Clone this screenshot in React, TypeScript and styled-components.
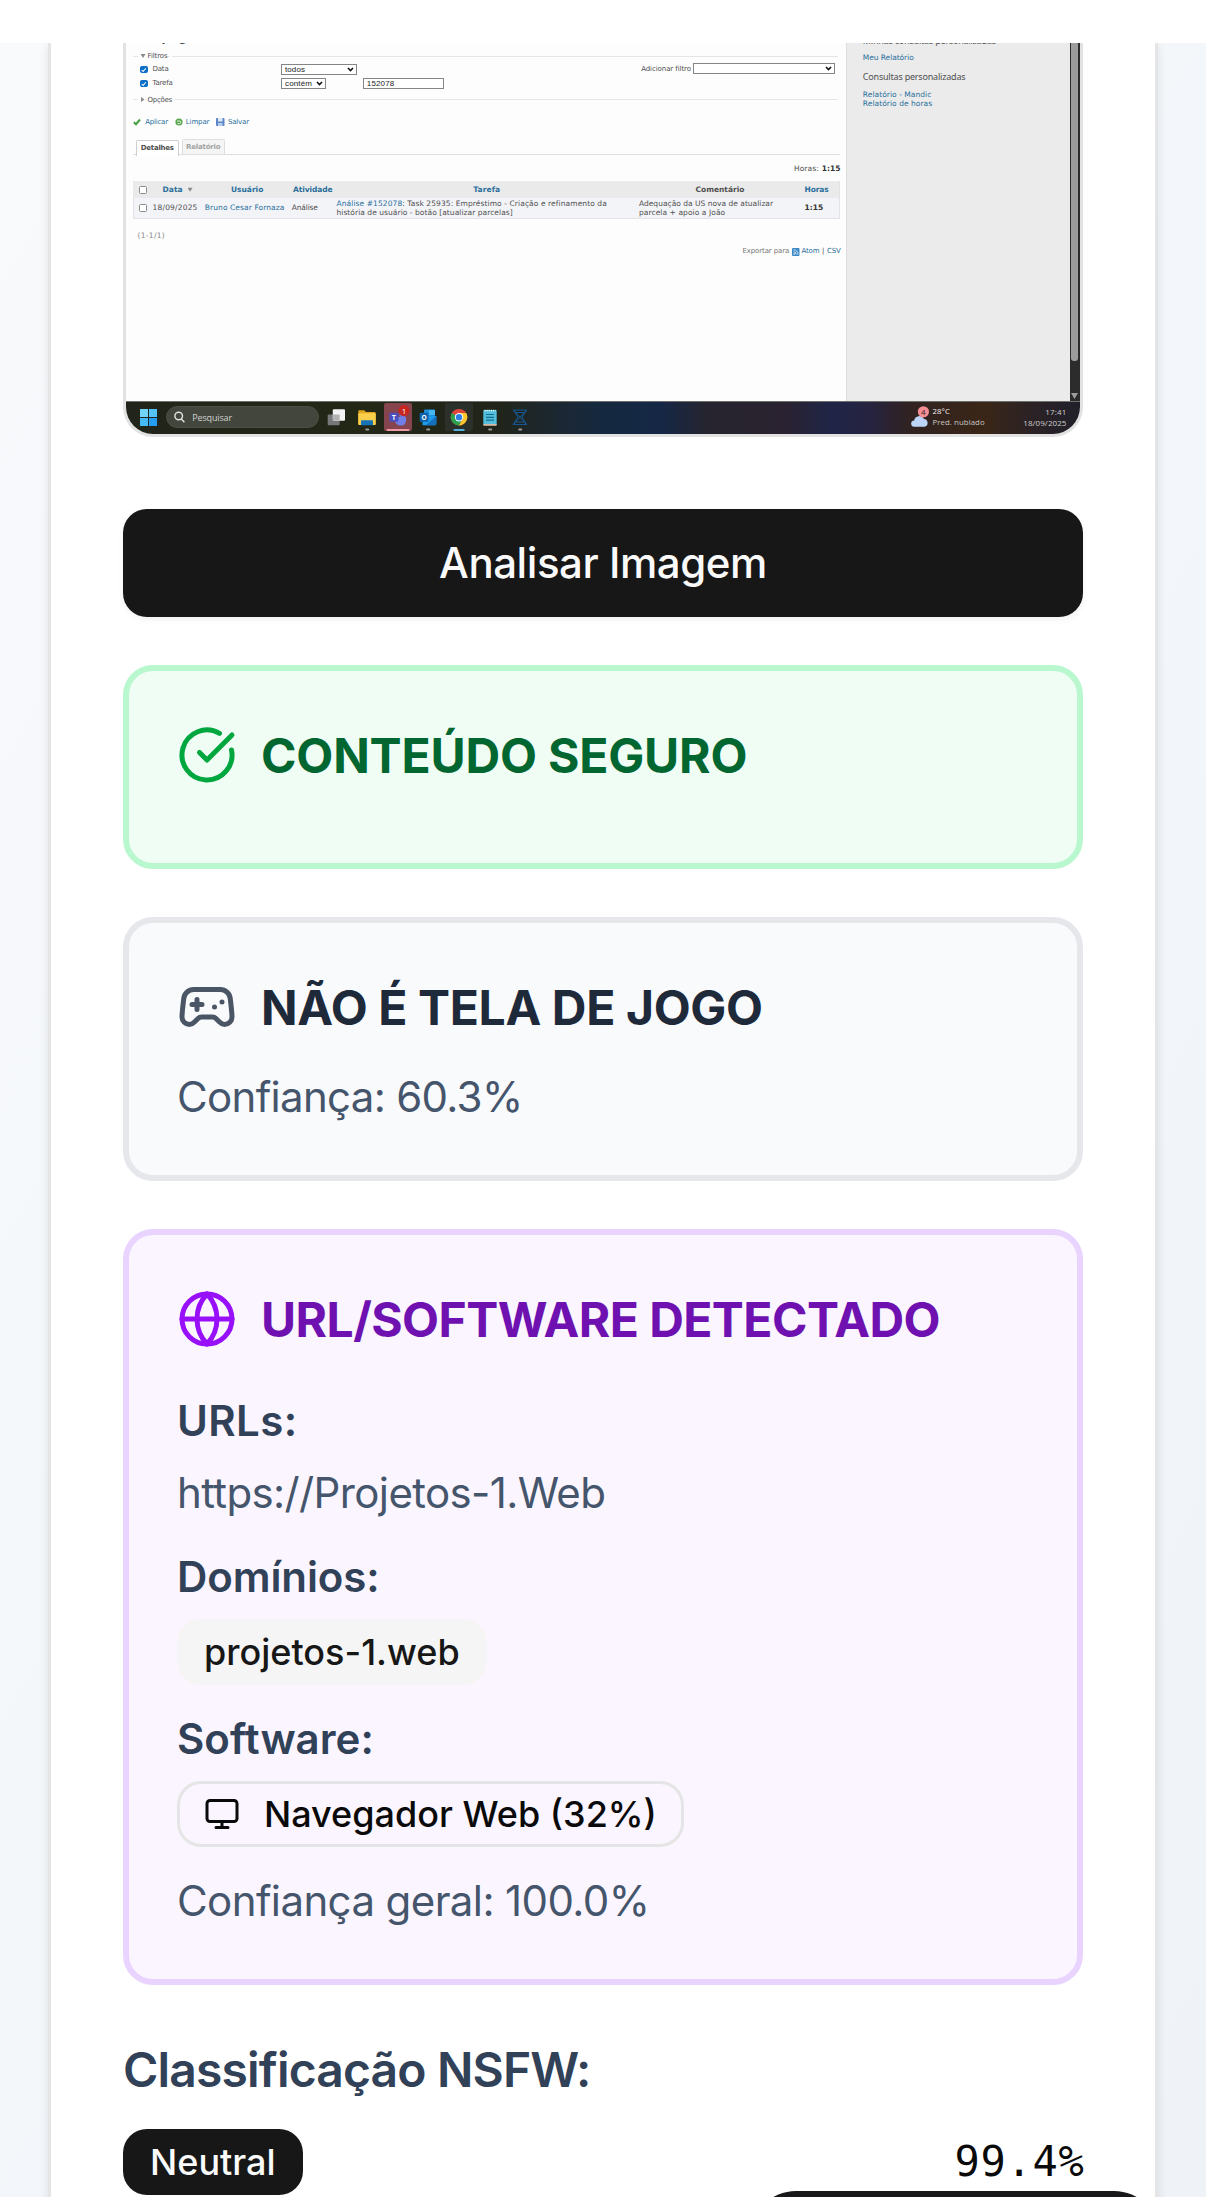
import React from "react";
import styled, { createGlobalStyle } from "styled-components";

const sans = 'Inter, "Liberation Sans", sans-serif';
const verdana = '"DejaVu Sans", sans-serif';

const GlobalStyle = createGlobalStyle`
  *, *::before, *::after { box-sizing: border-box; }
  body { margin: 0; background: #fff; font-family: ${sans}; }
  h2, h3, p { margin: 0; }
`;

/* ---------- page shell ---------- */

const Page = styled.div`
  position: relative;
  display: flex;
  flex-direction: column;
  height: 2197px;
  overflow: hidden;
`;

const StatusArea = styled.header`
  flex: none;
  height: 43px;
  background: #fff;
`;

const Backdrop = styled.main`
  flex: 1;
  display: flex;
  min-height: 0;
  padding: 0 48px;
  overflow: hidden;
  background: linear-gradient(to bottom right, #f8fafc, #eff3f8);
`;

const Card = styled.section`
  flex: 1;
  display: flex;
  flex-direction: column;
  height: 2300px;
  padding: 0 72px;
  border: 3px solid #e5e5e5;
  border-top: 0;
  background: #fff;
  box-shadow: 0 3px 9px rgba(0, 0, 0, 0.1);
`;

/* ---------- uploaded capture ---------- */

const Preview = styled.div`
  flex: none;
  display: flex;
  flex-direction: column;
  height: 394px;
  border: 3px solid #e2e2e2;
  border-top: 0;
  border-radius: 0 0 30px 30px;
  overflow: hidden;
  background: #fdfdfd;
  font-family: ${verdana};
  color: #484848;
`;

const Screen = styled.div`
  flex: 1;
  display: flex;
  min-height: 0;
`;

const Report = styled.div`
  flex: none;
  display: flex;
  flex-direction: column;
  width: 720.5px;
  padding: 0 6px 0 7px;
  border-right: 1px solid #dcdcdc;
`;

const Tiny = styled.span<{ $size?: number; $ls?: number; $bold?: boolean; $color?: string; $w?: number; $font?: string }>`
  flex: none;
  display: block;
  white-space: nowrap;
  width: ${(p) => (p.$w ? `${p.$w}px` : "auto")};
  font-family: ${(p) => p.$font ?? verdana};
  font-size: ${(p) => p.$size ?? 7}px;
  font-weight: ${(p) => (p.$bold ? 700 : 400)};
  letter-spacing: ${(p) => p.$ls ?? 0}px;
  color: ${(p) => p.$color ?? "#505050"};
`;

const link = "#2a6f9c";

const ReportTitle = styled.div`
  flex: none;
  height: 14px;
  margin-top: -10px;
  padding-left: 5px;
  line-height: 8px;
  font-size: 11.5px;
  font-weight: 700;
  letter-spacing: -0.9px;
`;

const Legend = styled.div<{ $h: number; $top?: number }>`
  flex: none;
  display: flex;
  align-items: center;
  height: ${(p) => p.$h}px;
  padding-top: ${(p) => p.$top ?? 0}px;
  line-height: 10px;
`;

const Rule = styled.i<{ $w?: number }>`
  ${(p) => (p.$w ? `flex: none; width: ${p.$w}px;` : "flex: 1;")}
  height: 1px;
  margin: 0 2px 0 0;
  background: #e6e6e6;
`;

const Caret = styled.i<{ $side?: boolean; $gap?: number }>`
  flex: none;
  width: 5px;
  height: 5px;
  margin: 0 2px 0 ${(p) => p.$gap ?? 1.5}px;
  background: #8a8a8a;
  clip-path: ${(p) => (p.$side ? "polygon(10% 0, 80% 50%, 10% 100%)" : "polygon(0 10%, 100% 10%, 50% 90%)")};
`;

const FilterRow = styled.div`
  flex: none;
  display: flex;
  align-items: center;
  height: 11px;
  margin-bottom: 3px;
  padding-left: 7px;
  line-height: 11px;

  & + & { margin-bottom: 0; }
`;

const Box = styled.i<{ $on?: boolean }>`
  flex: none;
  display: flex;
  width: 7.5px;
  height: 7.7px;
  margin-right: 5.1px;
  border: 1px solid ${(p) => (p.$on ? "#0d6fc6" : "#8c8c8c")};
  border-radius: 1.5px;
  background: ${(p) => (p.$on ? "#0d6fc6" : "#fff")};
`;

const Field = styled.div<{ $w: number; $ml?: number; $up?: number }>`
  flex: none;
  display: flex;
  align-items: center;
  justify-content: space-between;
  width: ${(p) => p.$w}px;
  height: 11.2px;
  margin-left: ${(p) => p.$ml ?? 0}px;
  margin-top: ${(p) => -(p.$up ?? 0)}px;
  padding: 0 2px 0 2.5px;
  border: 1px solid #858585;
  background: #fff;
`;

const Actions = styled.div`
  flex: none;
  display: flex;
  align-items: center;
  height: 24px;
  line-height: 10px;
`;

const Action = styled.div<{ $w: number; $gap: number }>`
  flex: none;
  display: flex;
  align-items: center;
  gap: ${(p) => p.$gap}px;
  width: ${(p) => p.$w}px;
`;

const Tabs = styled.div`
  flex: none;
  display: flex;
  align-items: flex-end;
  gap: 3px;
  height: 16px;
  margin-top: 5px;
  padding-left: 3px;
  border-bottom: 1.5px solid #dedede;
`;

const Tab = styled.div<{ $w: number; $active?: boolean }>`
  display: flex;
  align-items: flex-start;
  justify-content: center;
  width: ${(p) => p.$w}px;
  height: ${(p) => (p.$active ? 16 : 15)}px;
  margin-bottom: ${(p) => (p.$active ? -1.5 : 0)}px;
  border: 1px solid ${(p) => (p.$active ? "#cfcfcf" : "#dedede")};
  border-bottom: 0;
  border-radius: 2px 2px 0 0;
  background: ${(p) => (p.$active ? "#fff" : "#f5f5f5")};
  line-height: 14.5px;
`;

const Totals = styled.div`
  flex: none;
  display: flex;
  justify-content: flex-end;
  gap: 3px;
  height: 26px;
  margin-right: -1px;
  line-height: 27px;
`;

const Table = styled.div`
  flex: none;
  border: 1px solid #e3e3e6;
  border-top-color: #ebebeb;
  height: 38px;
  background: #f3f4f8;
`;

const TableRow = styled.div<{ $head?: boolean }>`
  display: grid;
  grid-template-columns: 19.6px 52.2px 87px 44.7px 302.5px 165.5px 1fr;
  align-items: center;
  height: ${(p) => (p.$head ? 15.5 : 21)}px;
  margin-left: -1px;
  line-height: 9.3px;
  background: ${(p) => (p.$head ? "#eaeaea" : "transparent")};
`;

const Cell = styled.div<{ $pad?: number }>`
  display: flex;
  flex-wrap: wrap;
  align-items: center;
  padding-left: ${(p) => p.$pad ?? 0}px;
`;

const Pager = styled.div`
  flex: none;
  height: 33px;
  padding-left: 4.5px;
  line-height: 33px;
`;

const Export = styled.div`
  flex: none;
  display: flex;
  align-items: center;
  justify-content: flex-end;
  height: 9px;
  margin: -5px -1px 0 0;
  line-height: 9px;
`;

const Sidebar = styled.aside`
  flex: 1;
  display: flex;
  flex-direction: column;
  padding-left: 16.3px;
  background: #ebebeb;
`;

const SideLine = styled.div<{ $h: number; $mt?: number }>`
  flex: none;
  height: ${(p) => p.$h}px;
  line-height: ${(p) => p.$h}px;
  margin-top: ${(p) => p.$mt ?? 0}px;
`;

const Scrollbar = styled.div`
  flex: none;
  display: flex;
  flex-direction: column;
  align-items: center;
  justify-content: space-between;
  width: 10.5px;
  padding-bottom: 2px;
  background: #2c2c2c;
`;

const Thumb = styled.i`
  width: 6.6px;
  height: 318px;
  border-radius: 0 0 3px 3px;
  background: #9c9c9c;
`;

const Taskbar = styled.div`
  flex: none;
  display: flex;
  align-items: center;
  height: 33.5px;
  padding: 0 13.5px 1px 14px;
  border-top: 1px solid #6d706c;
  background: linear-gradient(
    to right,
    #20241a 0%, #222716 24%, #20241a 39%, #1a2838 47%, #14293f 50%, #152746 56%,
    #26242f 61%, #2a2230 69%, #1f2548 74%, #262340 78%, #302222 82%, #3a2617 90%, #2b2226 95%, #20202a 100%
  );
`;

const Search = styled.div`
  flex: none;
  display: flex;
  align-items: center;
  gap: 7px;
  width: 153.6px;
  height: 22.4px;
  margin: 0 1.5px 0 8.7px;
  padding-left: 7.5px;
  border: 1px solid #4c4f47;
  border-radius: 12px;
  background: #42463d;
`;

const Slot = styled.div`
  flex: none;
  display: flex;
  justify-content: center;
  width: 30.7px;
`;

const Weather = styled.div`
  display: flex;
  align-items: center;
  gap: 5px;
  margin-left: auto;
`;

const Stack = styled.div<{ $right?: boolean; $ml?: number }>`
  display: flex;
  flex-direction: column;
  align-items: ${(p) => (p.$right ? "flex-end" : "flex-start")};
  margin-left: ${(p) => p.$ml ?? 0}px;
  line-height: 11.2px;
`;

/* ---------- analysis results ---------- */

const AnalyzeButton = styled.button`
  flex: none;
  height: 108px;
  margin: 72px 0 48px;
  padding: 0 0 1px;
  border: 0;
  border-radius: 24px;
  background: #171717;
  color: #fafafa;
  font: 500 42px/60px ${sans};
  letter-spacing: -0.45px;
  box-shadow: 0 3px 6px rgba(0, 0, 0, 0.05);
`;

const tones = {
  safe: { bg: "#f0fdf4", border: "#b9f8cf", icon: "#00a63e", title: "#016630" },
  neutral: { bg: "#f9fafc", border: "#e5e7eb", icon: "#4a5565", title: "#1e2939" },
  detected: { bg: "#faf5ff", border: "#e9d4ff", icon: "#9810fa", title: "#6e11b0" },
};
type Tone = keyof typeof tones;

const Panel = styled.section<{ $tone: Tone }>`
  flex: none;
  display: flex;
  flex-direction: column;
  align-items: flex-start;
  margin-bottom: 48px;
  padding: 48px;
  border: 6px solid ${(p) => tones[p.$tone].border};
  border-radius: 30px;
  background: ${(p) => tones[p.$tone].bg};
`;

const PanelHead = styled.div<{ $tone: Tone }>`
  display: flex;
  align-items: center;
  gap: 24px;
  height: 72px;
  margin-bottom: 24px;
  color: ${(p) => tones[p.$tone].icon};

  svg { flex: none; display: block; }
`;

const PanelTitle = styled.h2<{ $tone: Tone; $ls: number }>`
  padding-top: 2px;
  font-size: 48px;
  font-weight: 700;
  line-height: 72px;
  white-space: nowrap;
  letter-spacing: ${(p) => p.$ls}px;
  color: ${(p) => tones[p.$tone].title};
`;

const BodyText = styled.p<{ $ls?: number }>`
  font-size: 42px;
  line-height: 60px;
  letter-spacing: ${(p) => p.$ls ?? -0.6}px;
  color: #45556c;
`;

const Label = styled(BodyText)`
  font-weight: 600;
  color: #314158;
`;

const Group = styled.div`
  display: flex;
  flex-direction: column;
  align-items: flex-start;
  gap: 12px;
  margin-bottom: 24px;
`;

const Details = styled.div`
  display: flex;
  flex-direction: column;
  padding-top: 12px;
`;

const Badge = styled.span<{ $kind: "solid" | "muted" | "outline" }>`
  display: inline-flex;
  align-items: center;
  gap: 24px;
  height: 66px;
  padding: 0 24px;
  border: 3px solid ${(p) => (p.$kind === "outline" ? "#e5e5e5" : "transparent")};
  border-radius: 24px;
  background: ${(p) => ({ solid: "#171717", muted: "#f5f5f5", outline: "transparent" })[p.$kind]};
  color: ${(p) => ({ solid: "#fafafa", muted: "#171717", outline: "#0a0a0a" })[p.$kind]};
  font-size: 36px;
  font-weight: 500;
  line-height: 48px;
  white-space: nowrap;
`;

const SectionTitle = styled.h3`
  height: 72px;
  padding-top: 1px;
  font-size: 48px;
  font-weight: 600;
  line-height: 72px;
  margin-bottom: 24px;
  letter-spacing: -0.83px;
  color: #314158;
`;

const ScoreRow = styled.div`
  flex: none;
  display: flex;
  align-items: center;
  justify-content: space-between;
`;

const Score = styled.span`
  font: 400 42px/60px "DejaVu Sans Mono", monospace;
  letter-spacing: 0.7px;
  margin-right: -1.5px;
  color: #0a0a0a;
`;

const Toast = styled.div`
  position: absolute;
  left: 750px;
  top: 2191px;
  width: 410px;
  height: 92px;
  border-radius: 46px;
  background: #18181a;
`;

/* ---------- icons ---------- */

const Lucide = ({ size = 60, children }: { size?: number; children: React.ReactNode }) => (
  <svg width={size} height={size} viewBox="0 0 24 24" fill="none" stroke="currentColor" strokeWidth={2} strokeLinecap="round" strokeLinejoin="round">
    {children}
  </svg>
);

const CheckIcon = () => (
  <Lucide>
    <path d="M21.801 10A10 10 0 1 1 17 3.335" />
    <path d="m9 11 3 3L22 4" />
  </Lucide>
);

const GamepadIcon = () => (
  <Lucide>
    <path d="M6 11h4M8 9v4M15 12h.01M18 10h.01" />
    <path d="M17.32 5H6.68a4 4 0 0 0-3.978 3.59c-.006.052-.01.101-.017.152C2.604 9.416 2 14.456 2 16a3 3 0 0 0 3 3c1 0 1.5-.5 2-1l1.414-1.414A2 2 0 0 1 9.828 16h4.344a2 2 0 0 1 1.414.586L17 18c.5.5 1 1 2 1a3 3 0 0 0 3-3c0-1.545-.604-6.584-.685-7.258-.007-.05-.011-.1-.017-.151A4 4 0 0 0 17.32 5z" />
  </Lucide>
);

const GlobeIcon = () => (
  <Lucide>
    <circle cx="12" cy="12" r="10" />
    <path d="M12 2a14.5 14.5 0 0 0 0 20 14.5 14.5 0 0 0 0-20" />
    <path d="M2 12h20" />
  </Lucide>
);

const MonitorIcon = () => (
  <Lucide size={36}>
    <rect width="20" height="14" x="2" y="3" rx="2" />
    <path d="M8 21h8M12 17v4" />
  </Lucide>
);

const Tick = () => (
  <svg width="5.5" height="5.7" viewBox="0 0 6 6" fill="none" stroke="#fff" strokeWidth="1.1">
    <path d="M.8 3.2 2.4 4.7 5.3 1.3" />
  </svg>
);

const Chevron = () => (
  <svg width="7" height="5" viewBox="0 0 7 5" fill="none" stroke="#111" strokeWidth="1.6">
    <path d="M1 1l2.5 2.5L6 1" />
  </svg>
);

const TaskIcon = ({ dot = true, children }: { dot?: boolean; children: React.ReactNode }) => (
  <Slot>
    <svg width="28" height="28" viewBox="0 0 28 28">
      {children}
      {dot && <rect x="12.2" y="25.6" width="4" height="2" rx="1" fill="#9a9b98" />}
    </svg>
  </Slot>
);

const TaskIcons = () => (
  <>
    <TaskIcon dot={false}>
      <rect x="5.7" y="11.5" width="12" height="10.7" rx="1" fill="#77787a" />
      <rect x="10.8" y="6.3" width="12.2" height="11.4" rx="1" fill="#f3f3f3" />
      <rect x="10.8" y="11.5" width="6.9" height="6.2" fill="#b3b3b3" />
    </TaskIcon>
    <TaskIcon>
      <path d="M5.3 8.4c0-.8.4-1.2 1.2-1.2h4.7l1.8 1.9h8.5c.7 0 1.2.5 1.2 1.2v11.200H5.3z" fill="#e3a51c" />
      <rect x="5.3" y="10.2" width="17.4" height="11.8" rx="1" fill="#fbcf4b" />
      <path d="M8 22.3v-3.800c0-.8.5-1.2 1.2-1.2h9.600c.8 0 1.2.4 1.2 1.2v3.800z" fill="#1673b8" />
    </TaskIcon>
    <TaskIcon dot={false}>
      <rect width="28" height="28" rx="2" fill="#86444f" />
      <circle cx="18.5" cy="12" r="3" fill="#6f7bdc" />
      <path d="M11 14h11v3.500c0 3-2 5-5 5s-6-2-6-5z" fill="#7180e8" />
      <rect x="5.4" y="9.8" width="9" height="9" rx="1" fill="#4a4fbd" />
      <text x="9.9" y="16.7" fontSize="6.5" fontWeight="700" fontFamily="Open Sans, sans-serif" textAnchor="middle" fill="#fff">T</text>
      <circle cx="20" cy="7.6" r="5.6" fill="#c62520" />
      <text x="20" y="10.6" fontSize="8" fontFamily="Open Sans, sans-serif" textAnchor="middle" fill="#fff">1</text>
      <rect x="2.5" y="26" width="23" height="2" rx="1" fill="#f19aa5" />
    </TaskIcon>
    <TaskIcon>
      <rect x="10" y="6.5" width="11" height="8" rx="1" fill="#1c8fdd" />
      <rect x="15" y="7" width="6" height="5" fill="#45b8f2" />
      <path d="M8.5 13 22.3 13v7.800c0 .9-.5 1.4-1.4 1.4H8.5z" fill="#1e9be9" />
      <path d="M22.3 13 12 22.2h8.900c.9 0 1.4-.5 1.4-1.4z" fill="#1470be" />
      <rect x="5.7" y="9.8" width="8.8" height="9" rx="1" fill="#0c62ad" />
      <text x="10.1" y="16.6" fontSize="6.5" fontWeight="700" fontFamily="Open Sans, sans-serif" textAnchor="middle" fill="#fff">O</text>
    </TaskIcon>
    <TaskIcon dot={false}>
      <rect width="28" height="28" rx="2" fill="#2c302a" />
      <circle cx="14" cy="14.2" r="8.3" fill="#e2453a" />
      <path d="M6.81 10.05A8.3 8.3 0 0 0 14 22.5l3.6-6.2L14 14.2z" fill="#2da04c" />
      <path d="M14 22.5A8.3 8.3 0 0 0 21.19 10.05H14v4.15l3.6 2.1z" fill="#fbc82c" />
      <circle cx="14" cy="14.2" r="4.2" fill="#fff" />
      <circle cx="14" cy="14.2" r="3.2" fill="#2f7de6" />
      <rect x="8.5" y="26" width="11.2" height="2" rx="1" fill="#55aedc" />
    </TaskIcon>
    <TaskIcon>
      <rect x="7.3" y="7" width="13.4" height="15.3" rx="1" fill="#54bfdc" />
      <path d="M7.3 21h13.4v.8c0 .6-.4.9-1 .9H8.3c-.6 0-1-.3-1-.9z" fill="#d9b9a0" />
      <path d="M8.5 7.5h11" stroke="#e6f6fa" strokeWidth="1.6" strokeDasharray="1.2 .9" />
      <path d="M10 11.5h8M10 14.3h8M10 17.1h8" stroke="#116f8d" strokeWidth="1.2" />
    </TaskIcon>
    <TaskIcon>
      <path d="M7.3 7h13.4L16 14l4.7 7.5H7.3L12 14zM7.3 7l13.4 14.5M20.7 7 7.3 21.5M10 9.5h8M10 19h8" fill="none" stroke="#145c9c" strokeWidth=".9" />
    </TaskIcon>
  </>
);

/* ---------- sections ---------- */

const arial = '"Liberation Sans", sans-serif';
const noto = '"Noto Sans", sans-serif';
const segoe = '"Open Sans", sans-serif';

const Capture = () => (
  <Preview>
    <Screen>
      <Report>
        <ReportTitle>Tempo gasto</ReportTitle>
        <Legend $h={17} $top={1}>
          <Rule $w={5} />
          <Caret $gap={0.5} />
          <Tiny $ls={-0.11}>Filtros</Tiny>
          <Rule $w={2} />
          <Rule />
        </Legend>
        <FilterRow>
          <Box $on><Tick /></Box>
          <Tiny $w={128.9} $ls={-0.2}>Data</Tiny>
          <Field $w={75.4}>
            <Tiny $size={8} $ls={0.1} $font={arial} $color="#222">todos</Tiny>
            <Chevron />
          </Field>
          <Tiny $w={284.3} />
          <Tiny $w={52} $ls={-0.085}>Adicionar filtro</Tiny>
          <Field $w={141.6} $up={2}><i /><Chevron /></Field>
        </FilterRow>
        <FilterRow>
          <Box $on><Tick /></Box>
          <Tiny $w={128.9} $ls={-0.2}>Tarefa</Tiny>
          <Field $w={45}>
            <Tiny $size={8} $ls={0.16} $font={arial} $color="#222">contém</Tiny>
            <Chevron />
          </Field>
          <Field $w={81} $ml={36.8}>
            <Tiny $size={8} $ls={0.15} $font={arial} $color="#222">152078</Tiny>
          </Field>
        </FilterRow>
        <Legend $h={21}>
          <Rule $w={5} />
          <Caret $side $gap={0.5} />
          <Tiny $ls={-0.28}>Opções</Tiny>
          <Rule $w={1} />
          <Rule />
        </Legend>
        <Actions>
          <Action $w={41.8} $gap={4.2}>
            <svg width="8" height="8" viewBox="0 0 8 8" fill="none" stroke="#4aa045" strokeWidth="2"><path d="M.8 4.2 3 6.2 7 1.5" /></svg>
            <Tiny $ls={-0.21} $color={link}>Aplicar</Tiny>
          </Action>
          <Action $w={41.2} $gap={3}>
            <svg width="8" height="8" viewBox="0 0 8 8"><circle cx="4" cy="4" r="3.6" fill="#58a64e" /><path d="M2 3h2.500a1.3 1.3 0 0 1 0 2.6H2.6" fill="none" stroke="#e7f5e4" strokeWidth="1" /></svg>
            <Tiny $ls={-0.12} $color={link}>Limpar</Tiny>
          </Action>
          <Action $w={40} $gap={3}>
            <svg width="9" height="8" viewBox="0 0 9 8"><rect width="8.5" height="8" rx="1" fill="#5c86c8" /><rect x="2" width="4.5" height="3.5" fill="#dfe9f7" /><rect x="2" y="5" width="4.5" height="3" fill="#b9cdec" /></svg>
            <Tiny $ls={-0.18} $color={link}>Salvar</Tiny>
          </Action>
        </Actions>
        <Tabs>
          <Tab $w={42.5} $active><Tiny $bold $ls={-0.22}>Detalhes</Tiny></Tab>
          <Tab $w={43.5}><Tiny $bold $ls={-0.18} $color="#a3a3a3">Relatório</Tiny></Tab>
        </Tabs>
        <Totals>
          <Tiny $size={7.5} $ls={0.1}>Horas:</Tiny>
          <Tiny $size={7.5} $bold $color="#333">1:15</Tiny>
        </Totals>
        <Table>
          <TableRow $head>
            <Cell $pad={6.2}><Box /></Cell>
            <Cell $pad={10}>
              <Tiny $size={7.5} $bold $color={link}>Data</Tiny>
              <Caret $gap={5} />
            </Cell>
            <Cell $pad={26.2}><Tiny $size={7.5} $bold $color={link}>Usuário</Tiny></Cell>
            <Cell $pad={1.2}><Tiny $size={7.5} $bold $ls={-0.09} $color={link}>Atividade</Tiny></Cell>
            <Cell $pad={136.8}><Tiny $size={7.5} $bold $ls={0.12} $color={link}>Tarefa</Tiny></Cell>
            <Cell $pad={56.5}><Tiny $size={7.5} $bold>Comentário</Tiny></Cell>
            <Cell><Tiny $size={7.5} $bold $ls={-0.1} $color={link}>Horas</Tiny></Cell>
          </TableRow>
          <TableRow>
            <Cell $pad={6.2}><Box /></Cell>
            <Cell><Tiny $size={7.5} $ls={0.17}>18/09/2025</Tiny></Cell>
            <Cell><Tiny $size={7.5} $ls={0.09} $color={link}>Bruno Cesar Fornaza</Tiny></Cell>
            <Cell><Tiny $size={7.5} $ls={-0.17}>Análise</Tiny></Cell>
            <Cell>
              <Tiny $size={7.5} $ls={0.088} $color={link}>Análise #152078</Tiny>
              <Tiny $size={7.5} $ls={0.088}>: Task 25935: Empréstimo - Criação e refinamento da</Tiny>
              <Tiny $size={7.5} $ls={0.052}>história de usuário - botão [atualizar parcelas]</Tiny>
            </Cell>
            <Cell>
              <Tiny $size={7.5} $ls={0.01}>Adequação da US nova de atualizar</Tiny>
              <Tiny $size={7.5} $ls={0.07}>parcela + apoio a João</Tiny>
            </Cell>
            <Cell><Tiny $size={7.5} $bold $color="#333">1:15</Tiny></Cell>
          </TableRow>
        </Table>
        <Pager><Tiny $size={7.5} $ls={0.3} $color="#888">(1-1/1)</Tiny></Pager>
        <Export>
          <Tiny $w={49.5} $ls={-0.118} $color="#777">Exportar para</Tiny>
          <svg width="8" height="8" viewBox="0 0 8 8"><rect width="7.5" height="8" rx="1" fill="#3a88c6" /><circle cx="2.2" cy="6" r=".8" fill="#fff" /><path d="M1.5 3.8a2.7 2.7 0 0 1 2.7 2.7M1.5 1.8a4.6 4.6 0 0 1 4.6 4.7" fill="none" stroke="#fff" strokeWidth=".8" /></svg>
          <Tiny $w={1.5} />
          <Tiny $w={20.5} $ls={-0.16} $color={link}>Atom</Tiny>
          <Tiny $w={5}>|</Tiny>
          <Tiny $ls={-0.2} $color={link}>CSV</Tiny>
        </Export>
      </Report>
      <Sidebar>
        <SideLine $h={19} $mt={-12}>
          <Tiny $size={9} $ls={-0.2} $font={noto}>Minhas consultas personalizadas</Tiny>
        </SideLine>
        <SideLine $h={15}><Tiny $size={7.5} $ls={-0.06} $color={link}>Meu Relatório</Tiny></SideLine>
        <SideLine $h={23}>
          <Tiny $size={9} $ls={-0.2} $font={noto}>Consultas personalizadas</Tiny>
        </SideLine>
        <SideLine $h={9} $mt={2}><Tiny $size={7.5} $ls={0.05} $color={link}>Relatório - Mandic</Tiny></SideLine>
        <SideLine $h={9}><Tiny $size={7.5} $ls={0.05} $color={link}>Relatório de horas</Tiny></SideLine>
      </Sidebar>
      <Scrollbar>
        <Thumb />
        <svg width="7" height="6" viewBox="0 0 7 6"><path d="M0 0h7L3.5 6z" fill="#9c9c9c" /></svg>
      </Scrollbar>
    </Screen>
    <Taskbar>
      <svg width="17" height="17" viewBox="0 0 17 17">
        <path d="M0 0h8v8H0z" fill="#72d3fa" />
        <path d="M9 0h8v8H9z" fill="#54c3f8" />
        <path d="M0 9h8v8H0z" fill="#43b9f7" />
        <path d="M9 9h8v8H9z" fill="#259df2" />
      </svg>
      <Search>
        <svg width="11" height="12" viewBox="0 0 11 12" fill="none" stroke="#dededc" strokeWidth="1.5"><circle cx="4.7" cy="5" r="3.8" /><path d="m7.4 8 3 3.2" /></svg>
        <Tiny $size={9} $ls={-0.13} $font={segoe} $color="#d0d1ce">Pesquisar</Tiny>
      </Search>
      <TaskIcons />
      <Weather>
        <svg width="19" height="22" viewBox="0 0 19 22">
          <path d="M4.5 20.8a3.2 3.2 0 0 1-.3-6.4A5.2 5.2 0 0 1 14 13a4 4 0 0 1 .8 7.8z" fill="#bcd5f8" />
          <circle cx="13.4" cy="5.8" r="5.6" fill="#f58e94" />
          <text x="13.4" y="8.7" fontSize="8" fontFamily="Open Sans, sans-serif" textAnchor="middle" fill="#2b1c1c">4</text>
        </svg>
        <Stack $ml={-1.5}>
          <Tiny $size={7.8} $ls={0.1} $font={segoe} $color="#f2f2f2">28°C</Tiny>
          <Tiny $size={7.8} $ls={0.08} $font={segoe} $color="#c9c5c4">Pred. nublado</Tiny>
        </Stack>
        <Stack $right $ml={33.5}>
          <Tiny $size={8} $ls={0.15} $font={segoe} $color="#d0cccc">17:41</Tiny>
          <Tiny $size={8} $ls={0.08} $font={segoe} $color="#d0cccc">18/09/2025</Tiny>
        </Stack>
      </Weather>
    </Taskbar>
  </Preview>
);

export default function App() {
  return (
    <Page>
      <GlobalStyle />
      <StatusArea />
      <Backdrop>
        <Card>
          <Capture />
          <AnalyzeButton>Analisar Imagem</AnalyzeButton>

          <Panel $tone="safe">
            <PanelHead $tone="safe">
              <CheckIcon />
              <PanelTitle $tone="safe" $ls={-0.16}>CONTEÚDO SEGURO</PanelTitle>
            </PanelHead>
          </Panel>

          <Panel $tone="neutral">
            <PanelHead $tone="neutral">
              <GamepadIcon />
              <PanelTitle $tone="neutral" $ls={-0.36}>NÃO É TELA DE JOGO</PanelTitle>
            </PanelHead>
            <BodyText $ls={-0.68}>Confiança: 60.3%</BodyText>
          </Panel>

          <Panel $tone="detected">
            <PanelHead $tone="detected">
              <GlobeIcon />
              <PanelTitle $tone="detected" $ls={-0.55}>URL/SOFTWARE DETECTADO</PanelTitle>
            </PanelHead>
            <Details>
              <Group>
                <Label $ls={0.4}>URLs:</Label>
                <BodyText $ls={-0.62}>https://Projetos-1.Web</BodyText>
              </Group>
              <Group>
                <Label $ls={-0.1}>Domínios:</Label>
                <Badge $kind="muted">projetos-1.web</Badge>
              </Group>
              <Group>
                <Label $ls={0.04}>Software:</Label>
                <Badge $kind="outline">
                  <MonitorIcon />
                  Navegador Web (32%)
                </Badge>
              </Group>
              <BodyText $ls={-0.6}>Confiança geral: 100.0%</BodyText>
            </Details>
          </Panel>

          <SectionTitle>Classificação NSFW:</SectionTitle>
          <ScoreRow>
            <Badge $kind="solid">Neutral</Badge>
            <Score>99.4%</Score>
          </ScoreRow>
        </Card>
      </Backdrop>
      <Toast />
    </Page>
  );
}
